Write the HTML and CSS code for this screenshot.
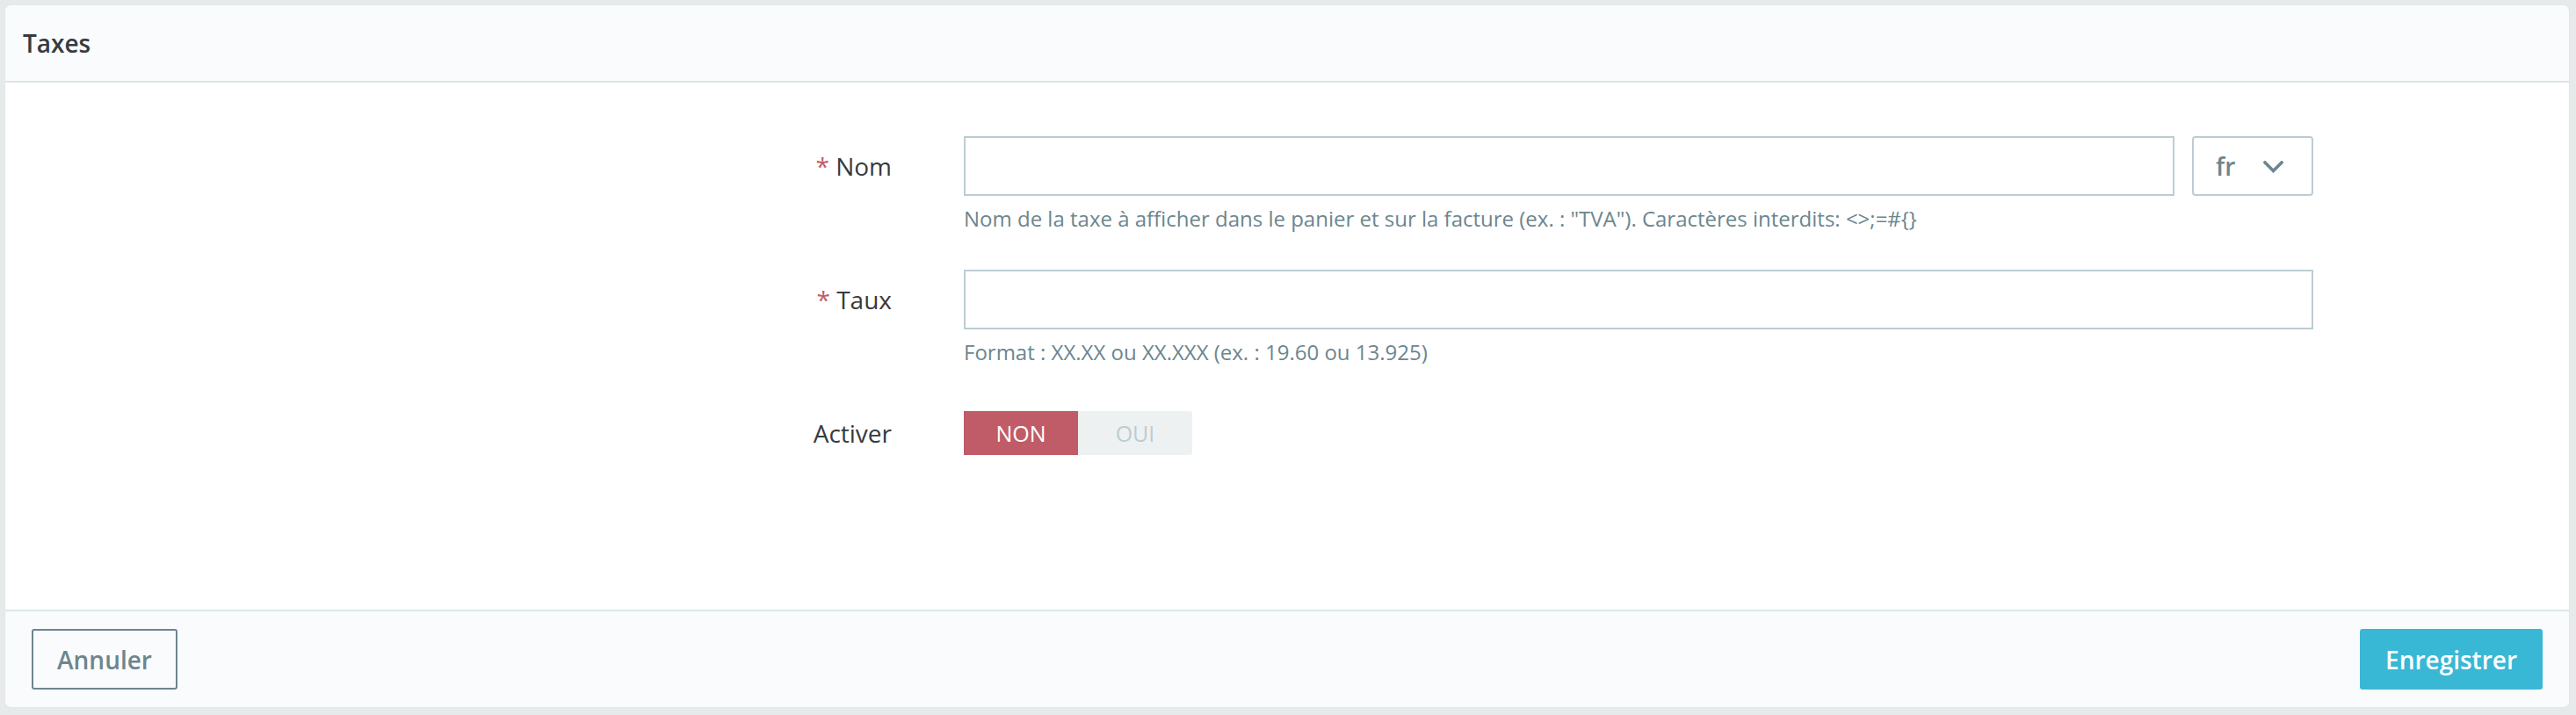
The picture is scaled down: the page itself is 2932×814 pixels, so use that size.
FILE: index.html
```html
<!DOCTYPE html>
<html lang="fr">
<head>
<meta charset="utf-8">
<title>Taxes</title>
<link rel="stylesheet" href="styles.css">
</head>
<body>
<div class="card">
  <div class="card-header">Taxes</div>
  <div class="card-body">
    <div class="form-row">
      <div class="form-label"><span class="req">*</span>&nbsp;Nom</div>
      <div class="form-field">
        <div class="input-group">
          <input class="text-input" type="text">
          <button class="lang-btn" type="button"><span>fr</span>
            <svg class="chev" width="23" height="14" viewBox="0 0 23 14"><polyline points="2,2 11.5,11.5 21,2" fill="none" stroke="#6c868e" stroke-width="3.6" stroke-linecap="square"/></svg>
          </button>
        </div>
        <div class="help">Nom de la taxe à afficher dans le panier et sur la facture (ex. : "TVA"). Caractères interdits: &lt;&gt;;=#{}</div>
      </div>
    </div>
    <div class="form-row">
      <div class="form-label"><span class="req">*</span>&nbsp;Taux</div>
      <div class="form-field">
        <input class="text-input full" type="text">
        <div class="help">Format : XX.XX ou XX.XXX (ex. : 19.60 ou 13.925)</div>
      </div>
    </div>
    <div class="form-row switch-row">
      <div class="form-label small">Activer</div>
      <div class="form-field">
        <div class="switch">
          <span class="sw-opt sw-on">NON</span>
          <span class="sw-opt sw-off">OUI</span>
        </div>
      </div>
    </div>
  </div>
  <div class="card-footer">
    <button class="btn btn-outline" type="button">Annuler</button>
    <button class="btn btn-primary" type="button">Enregistrer</button>
  </div>
</div>
</body>
</html>
```

FILE: styles.css
```css
* { box-sizing: border-box; }
html, body { margin: 0; padding: 0; }
body {
  background: #e6eaeb;
  font-family: "Open Sans", "Noto Sans", sans-serif;
  color: #363a41;
  padding: 6px 8px 7px 6px;
}
.card {
  background: #fff;
  border-radius: 7px;
  overflow: hidden;
  box-shadow: 0 0 2px rgba(0,0,0,0.06);
}
.card-header {
  height: 88px;
  display: flex;
  align-items: center;
  padding-left: 20px;
  background: #fafbfc;
  border-bottom: 2px solid #dbe6e9;
  font-size: 28px;
  line-height: 42px;
  font-weight: 600;
  color: #363a41;
}
.card-body {
  padding: 61px 0 176px 0;
}
.form-row {
  display: grid;
  grid-template-columns: 1009px 1536px;
  column-gap: 82px;
  margin-bottom: 40px;
}
.form-row.switch-row {
  margin-top: 49px;
  margin-bottom: 0;
}
.form-label {
  height: 68px;
  display: flex;
  align-items: center;
  justify-content: flex-end;
  font-size: 28px;
  line-height: 42px;
  color: #363a41;
}
.form-label.small { height: 50px; }
.req { color: #c05c67; }
.input-group {
  display: flex;
  gap: 20px;
}
.text-input {
  display: block;
  height: 68px;
  width: 1378px;
  border: 2px solid #bbcdd2;
  border-radius: 0;
  background: #fff;
  margin: 0;
  padding: 0 16px;
  font-family: inherit;
  font-size: 28px;
  outline: none;
}
.text-input.full { width: 1536px; }
.lang-btn {
  width: 138px;
  height: 68px;
  border: 2px solid #bbcdd2;
  border-radius: 4px;
  background: #fff;
  margin: 0;
  padding: 0 0 0 25px;
  display: flex;
  align-items: center;
  font-family: inherit;
  font-size: 28px;
  line-height: 42px;
  font-weight: 600;
  color: #6c868e;
}
.lang-btn .chev {
  margin-left: 32px;
  margin-top: 2px;
}
.help {
  margin-top: 8px;
  font-size: 24px;
  line-height: 36px;
  color: #6c868e;
}
.switch {
  display: flex;
  height: 50px;
  width: 260px;
}
.sw-opt {
  width: 130px;
  height: 50px;
  display: flex;
  align-items: center;
  justify-content: center;
  font-size: 25px;
  line-height: 36px;
}
.sw-on {
  background: #c05c67;
  color: #fff;
}
.sw-off {
  background: #eef1f2;
  color: #bbcdd2;
  border-radius: 0 3px 3px 0;
}
.card-footer {
  background: #fafbfc;
  border-top: 2px solid #dbe6e9;
  padding: 20px 30px 20px 30px;
  display: flex;
  justify-content: space-between;
  align-items: center;
}
.btn {
  height: 69px;
  margin: 0;
  font-family: inherit;
  font-size: 28px;
  line-height: 42px;
  font-weight: 600;
  border-radius: 3px;
  display: flex;
  align-items: center;
  justify-content: center;
}
.btn-outline {
  width: 166px;
  background: transparent;
  border: 2px solid #6c868e;
  color: #6c868e;
}
.btn-primary {
  width: 208px;
  background: #39b8d5;
  border: 0;
  color: #fff;
}
```
